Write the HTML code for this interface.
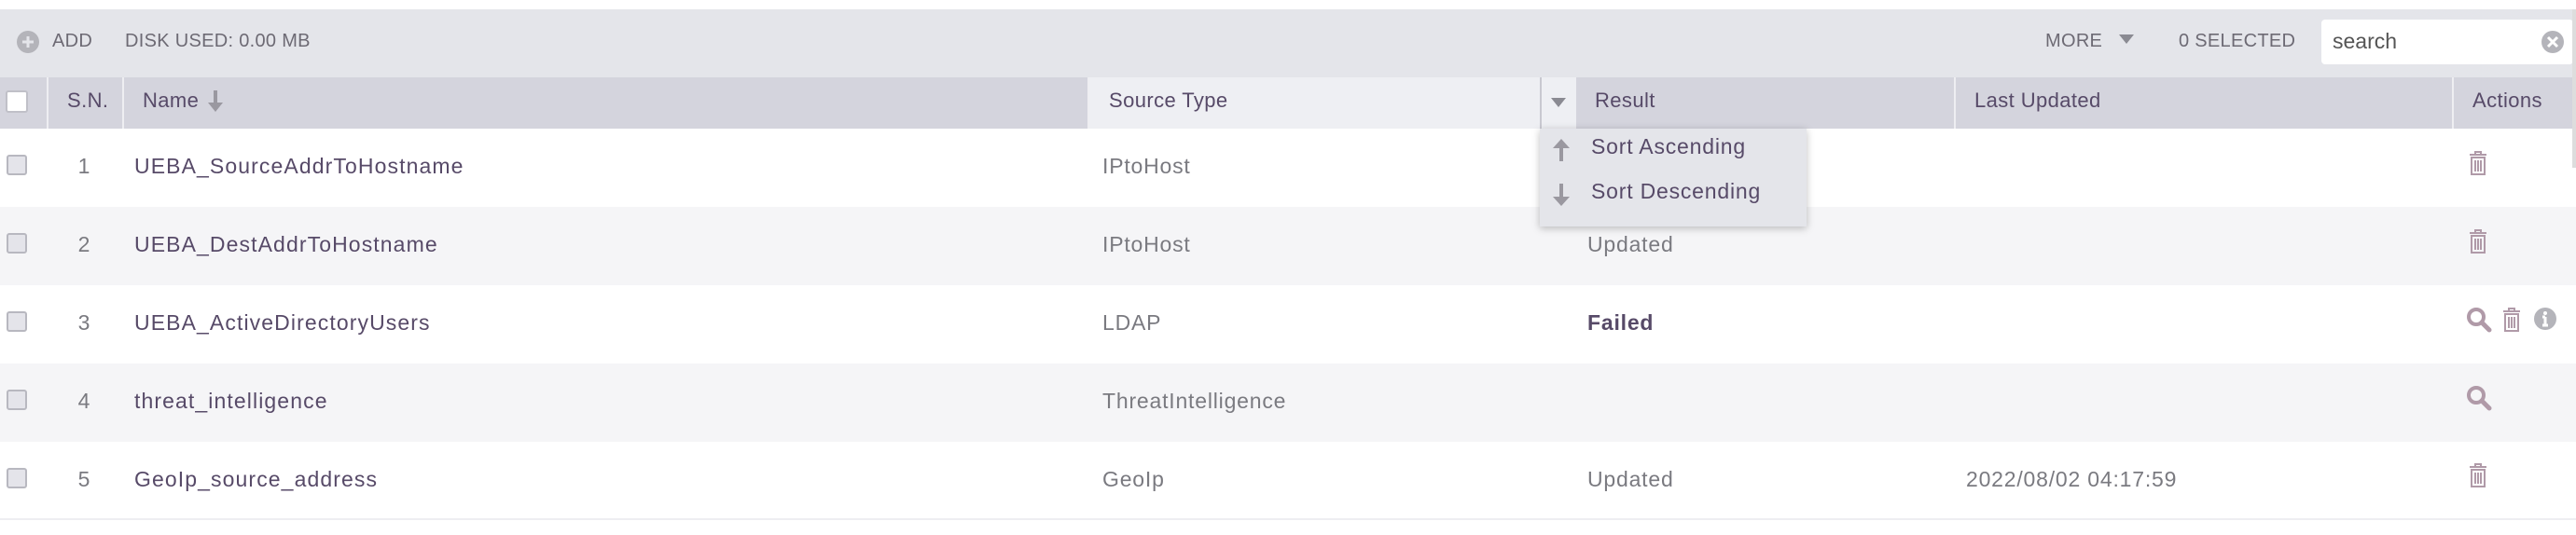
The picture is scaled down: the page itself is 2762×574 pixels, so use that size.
<!DOCTYPE html>
<html><head><meta charset="utf-8"><style>
*{box-sizing:border-box;margin:0;padding:0}
body{width:2762px;height:574px;background:#fff;font-family:"Liberation Sans",sans-serif;position:relative;overflow:hidden;color:#574a68}
.abs{position:absolute}
.tb{left:0;top:10px;width:2762px;height:73px;background:#e4e5ea}
.tbt{font-size:20px;color:#6d6a74;top:33px;letter-spacing:0.3px}
.hd{left:0;top:83px;width:2762px;height:55px;background:#d4d4dd}
.ht{font-size:22px;top:95px;color:#574a68;letter-spacing:0.4px}
.sep{top:83px;width:2px;height:55px;background:#eeeef2}
.row{left:0;width:2762px;height:84px}
.cb{width:22px;height:22px;border:2px solid #b8b8c0;border-radius:3px;background:#e4e4ea;left:7px}
.sn{font-size:23px;color:#7a7a80;width:30px;text-align:center;left:75px}
.nm{font-size:23px;left:144px;color:#574a68;letter-spacing:1.1px}
.st{font-size:23px;left:1182px;color:#7a7a80;letter-spacing:0.8px}
.rs{font-size:23px;left:1702px;color:#7a7a80;letter-spacing:0.8px}
.lu{font-size:23px;left:2108px;color:#7a7a80;letter-spacing:0.8px}
</style></head><body>
<div class="abs tb"></div>
<svg class="abs" style="left:17px;top:32px" width="26" height="26" viewBox="0 0 26 26"><circle cx="13" cy="13" r="12" fill="#b4b4ba"/><path d="M13 7v12M7 13h12" stroke="#e4e5ea" stroke-width="3"/></svg>
<div class="abs tbt" style="left:56px">ADD</div>
<div class="abs tbt" style="left:134px">DISK USED: 0.00 MB</div>
<div class="abs tbt" style="left:2193px">MORE</div>
<svg class="abs" style="left:2272px;top:36px" width="16" height="12"><path d="M0 1h16L8 11z" fill="#8a8a92"/></svg>
<div class="abs tbt" style="left:2336px">0 SELECTED</div>
<div class="abs" style="left:2489px;top:21px;width:270px;height:48px;background:#fff;border-radius:4px"></div>
<div class="abs" style="left:2501px;top:31px;font-size:23px;color:#555">search</div>
<svg class="abs" style="left:2724px;top:32px" width="26" height="26"><circle cx="13" cy="13" r="12" fill="#b4b4ba"/><path d="M8 8l10 10M18 8L8 18" stroke="#fff" stroke-width="3"/></svg>

<div class="abs hd"></div>
<div class="abs" style="left:1168px;top:83px;width:522px;height:55px;background:#eeeff3"></div>
<div class="abs sep" style="left:50px"></div>
<div class="abs sep" style="left:131px"></div>
<div class="abs sep" style="left:1166px"></div>
<div class="abs" style="left:1651px;top:83px;width:2px;height:55px;background:#c8c8d0"></div>
<div class="abs sep" style="left:2095px"></div>
<div class="abs sep" style="left:2629px"></div>
<div class="abs" style="left:6px;top:97px;width:24px;height:24px;background:#fff;border:2px solid #c0c0c8;border-radius:3px"></div>
<div class="abs ht" style="left:72px">S.N.</div>
<div class="abs ht" style="left:153px">Name</div>
<svg class="abs" style="left:222px;top:95px" width="18" height="26"><path d="M9 2v16" stroke="#9a98a0" stroke-width="4"/><path d="M1 15h16L9 25z" fill="#9a98a0"/></svg>
<div class="abs ht" style="left:1189px">Source Type</div>
<svg class="abs" style="left:1663px;top:104px" width="16" height="12"><path d="M0 1h16L8 11z" fill="#8a8a92"/></svg>
<div class="abs ht" style="left:1710px">Result</div>
<div class="abs ht" style="left:2117px">Last Updated</div>
<div class="abs ht" style="left:2651px">Actions</div>

<div class="abs row" style="top:138px;background:#fff"></div>
<div class="abs row" style="top:222px;background:#f5f5f7"></div>
<div class="abs row" style="top:306px;background:#fff"></div>
<div class="abs row" style="top:390px;background:#f5f5f7"></div>
<div class="abs row" style="top:474px;background:#fff"></div>
<div class="abs" style="left:0;top:556px;width:2762px;height:2px;background:#eeeef2"></div>

<div class="abs cb" style="top:166px"></div><div class="abs sn" style="top:165px">1</div><div class="abs nm" style="top:165px">UEBA_SourceAddrToHostname</div><div class="abs st" style="top:165px">IPtoHost</div>
<div class="abs cb" style="top:250px"></div><div class="abs sn" style="top:249px">2</div><div class="abs nm" style="top:249px">UEBA_DestAddrToHostname</div><div class="abs st" style="top:249px">IPtoHost</div><div class="abs rs" style="top:249px">Updated</div>
<div class="abs cb" style="top:334px"></div><div class="abs sn" style="top:333px">3</div><div class="abs nm" style="top:333px">UEBA_ActiveDirectoryUsers</div><div class="abs st" style="top:333px">LDAP</div><div class="abs rs" style="top:333px;font-weight:bold;color:#574a68">Failed</div>
<div class="abs cb" style="top:418px"></div><div class="abs sn" style="top:417px">4</div><div class="abs nm" style="top:417px">threat_intelligence</div><div class="abs st" style="top:417px">ThreatIntelligence</div>
<div class="abs cb" style="top:502px"></div><div class="abs sn" style="top:501px">5</div><div class="abs nm" style="top:501px">GeoIp_source_address</div><div class="abs st" style="top:501px">GeoIp</div><div class="abs rs" style="top:501px">Updated</div><div class="abs lu" style="top:501px">2022/08/02 04:17:59</div>

<svg width="0" height="0" style="position:absolute"><defs>
<symbol id="tr" viewBox="0 0 22 28"><path d="M8 4V2h6v2M2 5h18M4 8h14v18H4zM8 11v12M11 11v12M14 11v12" fill="none" stroke="#b09aa8" stroke-width="2"/></symbol>
<symbol id="mg" viewBox="0 0 28 28"><circle cx="11" cy="11" r="8" fill="none" stroke="#b09aa8" stroke-width="4"/><path d="M17 17l8 8" stroke="#b09aa8" stroke-width="5" stroke-linecap="round"/></symbol>
</defs></svg>
<svg class="abs" style="left:2646px;top:161px" width="22" height="28"><use href="#tr"/></svg>
<svg class="abs" style="left:2646px;top:245px" width="22" height="28"><use href="#tr"/></svg>
<svg class="abs" style="left:2644px;top:329px" width="28" height="28"><use href="#mg"/></svg>
<svg class="abs" style="left:2682px;top:329px" width="22" height="28"><use href="#tr"/></svg>
<svg class="abs" style="left:2716px;top:329px" width="26" height="26"><circle cx="13" cy="13" r="12" fill="#b4b4ba"/><path d="M13 11v9M10 11h3M10 20h6" stroke="#fff" stroke-width="3"/><circle cx="13" cy="7" r="2" fill="#fff"/></svg>
<svg class="abs" style="left:2644px;top:413px" width="28" height="28"><use href="#mg"/></svg>
<svg class="abs" style="left:2646px;top:496px" width="22" height="28"><use href="#tr"/></svg>

<div class="abs" style="left:1651px;top:138px;width:286px;height:105px;background:#e4e5ea;box-shadow:0 2px 8px rgba(0,0,0,.25)"></div>
<svg class="abs" style="left:1664px;top:147px" width="20" height="28"><path d="M10 26V8" stroke="#9a98a0" stroke-width="4"/><path d="M1 12h18L10 2z" fill="#9a98a0"/></svg>
<div class="abs" style="left:1706px;top:144px;font-size:23px;color:#574a68;letter-spacing:0.8px">Sort Ascending</div>
<svg class="abs" style="left:1664px;top:195px" width="20" height="28"><path d="M10 2v18" stroke="#9a98a0" stroke-width="4"/><path d="M1 16h18L10 26z" fill="#9a98a0"/></svg>
<div class="abs" style="left:1706px;top:192px;font-size:23px;color:#574a68;letter-spacing:0.8px">Sort Descending</div>
<div class="abs" style="left:2758px;top:10px;width:4px;height:170px;background:#ddd"></div>
</body></html>
